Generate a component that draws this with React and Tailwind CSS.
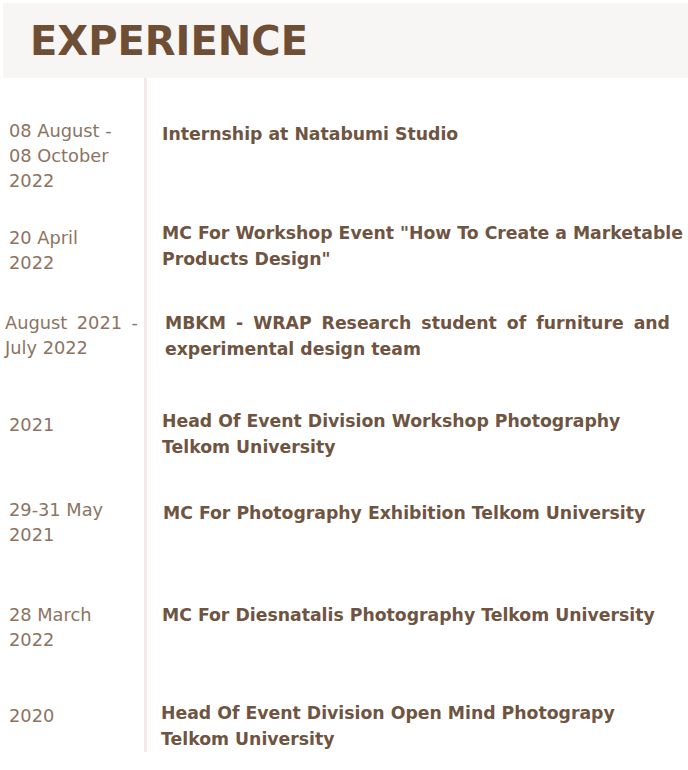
import React from "react";

const items = [
  { date: ["08 August -", "08 October", "2022"], title: "Internship at Natabumi Studio", rowCls: "h-[142px]", dateCls: "pt-[40px] pl-[9px]", titleCls: "pt-[43px] pl-[15px]" },
  { date: ["20 April", "2022"], title: "MC For Workshop Event \"How To Create a Marketable Products Design\"", rowCls: "h-[90px]", dateCls: "pt-[5px] pl-[9px]", titleCls: "pl-[15px]" },
  { date: ["August 2021 -", "July 2022"], title: "MBKM - WRAP Research student of furniture and experimental design team", rowCls: "h-[98px]", dateCls: "pl-[5px] pr-[6px]", titleCls: "pl-[18px] pr-[18px] text-justify", justify: true },
  { date: ["2021"], title: "Head Of Event Division Workshop Photography Telkom University", rowCls: "h-[89px]", dateCls: "pt-[4px] pl-[9px]", titleCls: "pl-[15px] pr-[50px]" },
  { date: ["29-31 May", "2021"], title: "MC For Photography Exhibition Telkom University", rowCls: "h-[105px]", dateCls: "pl-[9px]", titleCls: "pt-[3px] pl-[16px]" },
  { date: ["28 March", "2022"], title: "MC For Diesnatalis Photography Telkom University", rowCls: "h-[98px]", dateCls: "pl-[9px]", titleCls: "pl-[15px]" },
  { date: ["2020"], title: "Head Of Event Division Open Mind Photograpy Telkom University", rowCls: "h-[52px]", dateCls: "pt-[3px] pl-[9px]", titleCls: "pl-[14px] pr-[50px]" },
];

export default function App() {
  return (
    <div className="w-[688px] h-[770px] bg-white overflow-hidden" style={{ fontFamily: "'DejaVu Sans', sans-serif" }}>
      <div className="ml-[3px] mt-[3px] h-[75px] bg-[#f8f6f5] flex items-center pl-[27px]">
        <h1 className="text-[40px] font-bold text-[#6e4f36] leading-none">EXPERIENCE</h1>
      </div>
      <div>
        {items.map((it, i) => (
          <div key={i} className={`flex ${it.rowCls}`}>
            <div className={`w-[144px] shrink-0 text-[17.8px] leading-[25px] text-[#8b7462] ${it.dateCls}`}>
              {it.date.map((d, j) => (
                <div key={j} className={it.justify && j === 0 ? "text-justify [text-align-last:justify]" : ""}>{d}</div>
              ))}
            </div>
            <div className="border-l-[3px] border-[#f1ece7] flex-1">
              <div className={`text-[17.3px] font-bold leading-[26px] text-[#6e5441] ${it.titleCls}`}>{it.title}</div>
            </div>
          </div>
        ))}
      </div>
    </div>
  );
}
